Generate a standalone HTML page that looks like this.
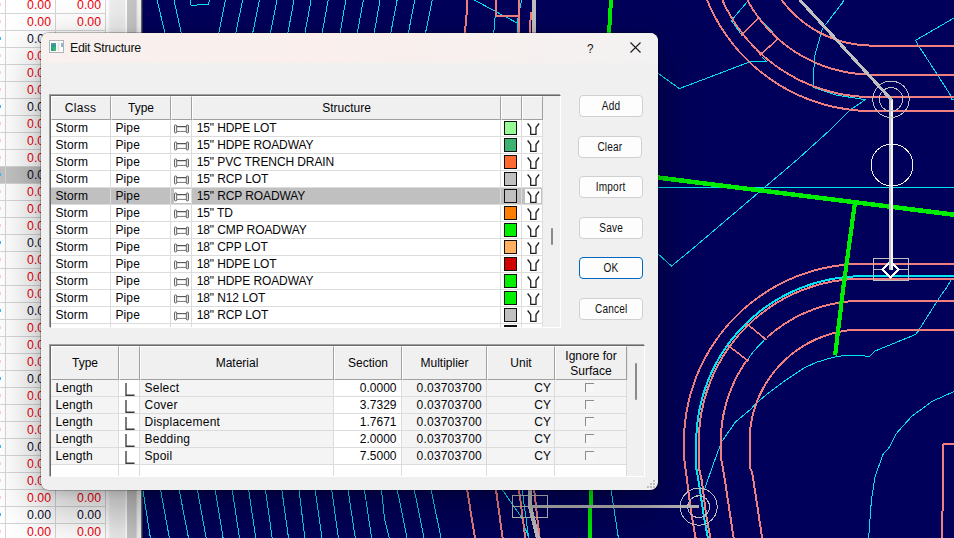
<!DOCTYPE html>
<html><head><meta charset="utf-8"><title>Edit Structure</title>
<style>
*{box-sizing:border-box;margin:0;padding:0}
html,body{width:954px;height:538px;overflow:hidden;background:#00005a}
body{position:relative;font-family:"Liberation Sans",Arial,sans-serif;font-size:12px;color:#050508}
.cad{position:absolute;left:0;top:0}
.sheet{position:absolute;left:0;top:0;width:143px;height:538px;overflow:hidden;
 background:linear-gradient(90deg,#fff 0,#fff 108px,#f6f6f6 109px,#eeeeee 110px,#eaeaea 118px,#ececec 125px,#fff 126px,#fff 127px,#c6c6c6 127px,#c3c3c3 136px,#e4e4e4 137px,#f0f0f0 138px,#f0f0f0 141px,#8a8a8a 141px,#3a3a50 142px,#16164a 143px)}
.sheet .r{position:absolute;left:0;width:106px;height:17px;border-bottom:1px solid #d6d6d6;color:#f0000c;line-height:16px;font-size:12.3px}
.sheet .r.b{color:#0c0c2a}
.sheet .r.sel{background:#c2c2c2}
.sheet .r i{position:absolute;left:0;top:6px;width:1px;height:3px;background:#ffc8f8}
.sheet .r.b i{background:#38b8ff}
.sheet .r span{position:absolute;top:0px;text-align:right;width:46px}
.sheet .c1{left:5px}
.sheet .c2{left:55px}
.sheet .v{position:absolute;top:0;width:1px;height:538px;background:#d6d6d6}
.dlg{position:absolute;left:41px;top:33px;width:617px;height:457px;background:#f0f0f0;border-radius:8px;overflow:hidden;
 box-shadow:0 0 0 1px rgba(0,0,0,.22)}
.shadow{position:absolute;left:41px;top:33px;width:617px;height:457px;border-radius:8px;box-shadow:0 18px 48px 4px rgba(0,0,0,.30),0 2px 10px rgba(0,0,0,.12)}
.tbar{position:absolute;left:0;top:0;width:100%;height:30px;background:linear-gradient(90deg,#f8f1ef 0,#faefec 45%,#f7f0ee 70%,#f3f2f2 100%)}
.ticon{position:absolute;left:8px;top:7px}
.ttl{position:absolute;left:29px;top:8px;font-size:12.4px;line-height:15px;color:#111;letter-spacing:-.3px}
.q{position:absolute;left:545.5px;top:7.5px;font-size:13px;line-height:15px;color:#111;transform:scaleX(.9);transform-origin:0 0}
.xb{position:absolute;left:588.5px;top:8.5px}
.hd{position:absolute;left:0;top:0;height:24px}
.hd span{position:absolute;top:0;height:24px;line-height:22px;text-align:center;background:#f0f0f0;border-right:1px solid #a0a0a0;border-bottom:1px solid #a0a0a0;border-left:1px solid #fff;border-top:1px solid #fff;box-shadow:1px 0 0 #e3e3e3}
.list1{position:absolute;left:9px;top:62px;width:511px;height:233px;background:#fff;border:1px solid #696969;border-right:1px solid #fff;border-bottom:1px solid #fff;box-shadow:-1px -1px 0 0 #a0a0a0;overflow:hidden}
.lr{position:absolute;left:0;width:492px;height:17px;border-bottom:1px solid #dcdcdc;line-height:16px}
.lr.sel{background:#c0c0c0}
.lr span{position:absolute;top:0;height:16px;white-space:nowrap;letter-spacing:-.1px}
.lr .a{left:4.5px;letter-spacing:.1px} .lr .b{left:64.5px;letter-spacing:.1px} .lr .ic{left:121px;width:20px} .lr .n{left:145.7px}
.lr .sw{left:451px;width:20px} .lr .fc{left:472px;width:20px}
.lr.sel .ic{background:#fff;left:123px;width:17px;top:1px;height:14px}
.lr.sel .ic .pi{left:.3px;top:3px}
.lr.sel .fc{background:#fff;left:474px;width:16px;top:1px;height:14px}
.lr.sel .fc .fu{left:1.5px;top:1.5px}
.pi{position:absolute;left:2.3px;top:4px}
.fu{position:absolute;left:3.5px;top:2.5px}
.sw b{position:absolute;left:2px;top:1px;width:13px;height:14px;border:1px solid #111}
.cv{position:absolute;top:24px;width:1px;height:210px;background:#dcdcdc}
.sbar{position:absolute;left:492px;top:0;width:18px;height:232px;background:#f0f0f0}
.sbar u{position:absolute;left:8px;width:2px;background:#8a8a8a;border-radius:1px}
.list2{position:absolute;left:9px;top:312px;width:595px;height:132px;background:#f0f0f0;border:1px solid #696969;border-right:1px solid #fff;border-bottom:1px solid #fff;box-shadow:-1px -1px 0 0 #a0a0a0;overflow:hidden}
.h2,.h2 span{height:34px}
.h2 span{line-height:32px}
.h2 span.two{line-height:15px;padding-top:2px}
.mr{position:absolute;left:0;width:576px;height:17px;line-height:16px}
.mr span{position:absolute;top:0;height:17px;border-right:1px solid #dcdcdc;border-bottom:1px solid #dcdcdc;white-space:nowrap;background:#f4f4f4}
.mr .t{left:0;width:68px;padding-left:4.5px;letter-spacing:.1px}
.mr .l{left:68px;width:21px;background:#fff}
.mr .m{left:89px;width:194px;padding-left:4.5px;letter-spacing:.25px}
.mr .s{left:283px;width:68px;background:#fff;text-align:right;padding-right:4.5px}
.mr .x{left:351px;width:85px;text-align:right;padding-right:4px;letter-spacing:.2px}
.mr .u{left:436px;width:68px;text-align:right;padding-right:3px}
.mr .k{left:504px;width:72px}
.mr.blank{height:12px} .mr.blank span{background:#fff;height:12px;border-bottom:0}
.li{position:absolute;left:6px;top:2.5px}
.k em{position:absolute;left:30px;top:3px;width:9px;height:9px;border-left:1px solid #8c8c8c;border-top:1px solid #8c8c8c;background:#f6f6f6}
.sbar2{position:absolute;left:577px;top:0;width:18px;height:132px;background:#f0f0f0}
.sbar2 u{position:absolute;left:7px;width:2px;background:#8a8a8a;border-radius:1px}
.btn{position:absolute;width:64px;height:22px;border:1px solid #d0d0d0;border-radius:4px;background:#fdfdfd;text-align:center;line-height:19px;font-size:12px;color:#111}
.btn.ok{border:1.5px solid #0067c0;line-height:19px}
.btn span{display:inline-block;position:relative;top:1px;transform:scaleX(.84);letter-spacing:.2px}
.grip{position:absolute;left:606px;top:447px}
</style></head>
<body>
<svg class="cad" width="954" height="538" viewBox="0 0 954 538" shape-rendering="crispEdges"><polyline points="157.1,0.0 165.2,34.0" fill="none" stroke="#00e4f0" stroke-width="1" />
<polyline points="174.0,0.0 181.5,34.0" fill="none" stroke="#00e4f0" stroke-width="1" />
<polyline points="190.3,0.0 190.3,4.5 191.6,5.3 197.4,5.0 198.4,4.0 208.4,4.0 209.7,0.0" fill="none" stroke="#00e4f0" stroke-width="1" />
<polyline points="225.5,0.0 223.0,12.0 218.7,34.0" fill="none" stroke="#00e4f0" stroke-width="1" />
<polyline points="242.6,0.0 235.6,34.0" fill="none" stroke="#00e4f0" stroke-width="1" />
<polyline points="259.5,0.0 252.5,34.0" fill="none" stroke="#00e4f0" stroke-width="1" />
<polyline points="277.1,0.0 270.3,34.0" fill="none" stroke="#00e4f0" stroke-width="1" />
<polyline points="294.0,0.0 287.7,34.0" fill="none" stroke="#00e4f0" stroke-width="1" />
<polyline points="311.1,0.0 304.8,34.0" fill="none" stroke="#00e4f0" stroke-width="1" />
<polyline points="328.2,0.0 321.9,34.0" fill="none" stroke="#00e4f0" stroke-width="1" />
<polyline points="345.8,0.0 340.0,34.0" fill="none" stroke="#00e4f0" stroke-width="1" />
<polyline points="363.4,0.0 357.1,34.0" fill="none" stroke="#00e4f0" stroke-width="1" />
<polyline points="380.0,0.0 374.0,34.0" fill="none" stroke="#00e4f0" stroke-width="1" />
<polyline points="397.1,0.0 390.6,34.0" fill="none" stroke="#00e4f0" stroke-width="1" />
<polyline points="414.7,0.0 408.2,34.0" fill="none" stroke="#00e4f0" stroke-width="1" />
<polyline points="432.3,0.0 425.3,34.0" fill="none" stroke="#00e4f0" stroke-width="1" />
<polyline points="474.3,0.0 517.1,23.0 517.1,34.0" fill="none" stroke="#00e4f0" stroke-width="1" />
<polyline points="495.2,16.0 493.7,34.0" fill="none" stroke="#00e4f0" stroke-width="1" />
<polyline points="521.6,0.0 517.1,23.0" fill="none" stroke="#00e4f0" stroke-width="1" />
<polyline points="142.7,489.0 150.4,538.0" fill="none" stroke="#00e4f0" stroke-width="1" />
<polyline points="160.4,489.0 169.4,538.0" fill="none" stroke="#00e4f0" stroke-width="1" />
<polyline points="179.0,489.0 188.5,538.0" fill="none" stroke="#00e4f0" stroke-width="1" />
<polyline points="197.2,489.0 206.2,538.0" fill="none" stroke="#00e4f0" stroke-width="1" />
<polyline points="215.0,489.0 223.1,538.0" fill="none" stroke="#00e4f0" stroke-width="1" />
<polyline points="232.1,489.0 239.5,538.0" fill="none" stroke="#00e4f0" stroke-width="1" />
<polyline points="248.5,489.0 255.8,538.0" fill="none" stroke="#00e4f0" stroke-width="1" />
<polyline points="265.3,489.0 272.2,538.0" fill="none" stroke="#00e4f0" stroke-width="1" />
<polyline points="281.7,489.0 288.5,538.0" fill="none" stroke="#00e4f0" stroke-width="1" />
<polyline points="298.9,489.0 304.9,538.0" fill="none" stroke="#00e4f0" stroke-width="1" />
<polyline points="315.0,489.0 322.0,538.0" fill="none" stroke="#00e4f0" stroke-width="1" />
<polyline points="331.6,489.0 338.4,538.0" fill="none" stroke="#00e4f0" stroke-width="1" />
<polyline points="347.9,489.0 355.3,538.0" fill="none" stroke="#00e4f0" stroke-width="1" />
<polyline points="364.3,489.0 371.6,538.0" fill="none" stroke="#00e4f0" stroke-width="1" />
<polyline points="381.4,489.0 384.7,520.0 389.3,538.0" fill="none" stroke="#00e4f0" stroke-width="1" />
<polyline points="397.1,489.0 407.0,538.0" fill="none" stroke="#00e4f0" stroke-width="1" />
<polyline points="414.1,489.0 424.0,538.0" fill="none" stroke="#00e4f0" stroke-width="1" />
<polyline points="431.0,489.0 441.0,538.0" fill="none" stroke="#00e4f0" stroke-width="1" />
<polyline points="501.8,489.0 521.1,516.7 528.7,538.0" fill="none" stroke="#00e4f0" stroke-width="1" />
<polyline points="522.0,489.0 528.7,538.0" fill="none" stroke="#00e4f0" stroke-width="1" />
<polyline points="610.9,489.0 618.4,538.0" fill="none" stroke="#00e4f0" stroke-width="1" />
<polyline points="747.0,2.0 731.4,20.5 740.6,33.5" fill="none" stroke="#00e4f0" stroke-width="1" />
<polyline points="759.0,17.6 778.3,38.5" fill="none" stroke="#00e4f0" stroke-width="1" />
<polyline points="761.6,56.5 766.6,61.4 750.2,61.7 679.4,88.6 657.0,72.5" fill="none" stroke="#00e4f0" stroke-width="1" />
<polyline points="843.5,0.0 842.7,2.5 822.5,28.5 819.2,40.0 815.0,55.0 813.8,70.0 813.3,87.5 836.0,95.0 865.3,99.7 849.4,110.5 830.0,130.0 796.8,160.0 691.1,250.0 671.5,266.0 657.0,253.0" fill="none" stroke="#00e4f0" stroke-width="1" />
<polyline points="954.0,18.0 915.6,40.3 918.2,45.0 951.7,97.0 951.7,99.5 954.0,99.5" fill="none" stroke="#00e4f0" stroke-width="1" />
<polyline points="657.0,187.4 954.0,187.4" fill="none" stroke="#00e4f0" stroke-width="1" />
<polyline points="954.0,276.3 862.0,276.3 857.7,276.4 853.3,276.5 849.0,276.8 844.7,277.2 840.4,277.7 836.1,278.3 831.8,279.1 827.5,279.9 823.3,280.9 819.1,281.9 814.9,283.1 810.8,284.4 806.7,285.8 802.6,287.3 798.6,288.9 794.6,290.6 790.7,292.4 786.8,294.4 782.9,296.4 779.1,298.5 775.4,300.7 771.8,303.0 768.1,305.4 764.6,307.9 761.1,310.5 757.7,313.2 754.4,316.0 751.1,318.9 747.9,321.8 744.8,324.8 741.8,327.9 738.9,331.1 736.0,334.4 733.2,337.7 730.5,341.1 727.9,344.6 725.4,348.1 723.0,351.8 720.7,355.4 718.5,359.1 716.4,362.9 714.4,366.8 712.4,370.7 710.6,374.6 708.9,378.6 707.3,382.6 705.8,386.7 704.4,390.8 703.1,394.9 701.9,399.1 700.9,403.3 699.9,407.5 699.1,411.8 698.3,416.1 697.7,420.4 697.2,424.7 696.8,429.0 696.5,433.3 696.4,437.7 696.3,442.0 696.1,467.1 698.7,481.6 703.7,515.1 707.9,538.0" fill="none" stroke="#00e4f0" stroke-width="2" />
<polyline points="766.6,340.1 765.7,338.7 763.9,340.4 762.2,342.2 760.4,343.9 758.7,345.7 757.1,347.5 755.4,349.4 753.8,351.2 752.3,353.1 750.7,355.1 749.2,357.0 748.2,361.1" fill="none" stroke="#00e4f0" stroke-width="1" />
<polyline points="950.9,280.5 945.0,290.0 940.0,296.7 918.2,331.1 915.6,334.5 874.5,351.2 869.5,356.6 865.3,356.6 864.5,355.4 844.3,355.4 832.6,357.4 815.8,362.5 804.0,368.0 784.2,381.2 767.4,393.8 757.4,402.2 749.8,410.0 735.6,421.8 722.1,441.1 717.1,453.7 704.5,489.1" fill="none" stroke="#00e4f0" stroke-width="1" />
<polyline points="954.0,391.6 931.6,401.6 911.4,416.7 896.3,433.5 888.8,448.0 883.3,453.7 875.1,476.4 871.4,500.1 868.7,538.0" fill="none" stroke="#00e4f0" stroke-width="1" />
<polyline points="466.3,0.0 466.3,12.0 464.3,34.0" fill="none" stroke="#f08080" stroke-width="1" /><polyline points="467.3,0.0 467.3,12.0 465.3,34.0" fill="none" stroke="#f08080" stroke-width="1" />
<polyline points="495.2,0.0 495.2,15.8" fill="none" stroke="#f08080" stroke-width="1" /><polyline points="496.2,0.0 496.2,15.8" fill="none" stroke="#f08080" stroke-width="1" /><polyline points="495.7,15.3 518.6,15.8" fill="none" stroke="#f08080" stroke-width="1" /><polyline points="495.7,16.3 518.6,16.8" fill="none" stroke="#f08080" stroke-width="1" /><polyline points="518.1,16.3 518.1,0.0" fill="none" stroke="#f08080" stroke-width="1" /><polyline points="519.1,16.3 519.1,0.0" fill="none" stroke="#f08080" stroke-width="1" />
<polyline points="518.6,16.0 518.6,34.0" fill="none" stroke="#f08080" stroke-width="1" /><polyline points="519.6,16.0 519.6,34.0" fill="none" stroke="#f08080" stroke-width="1" />
<polyline points="530.5,12.0 529.2,34.0" fill="none" stroke="#f08080" stroke-width="1" /><polyline points="531.5,12.0 530.2,34.0" fill="none" stroke="#f08080" stroke-width="1" />
<polyline points="466.5,489.0 474.5,538.0" fill="none" stroke="#f08080" stroke-width="1" /><polyline points="467.5,489.0 475.5,538.0" fill="none" stroke="#f08080" stroke-width="1" />
<polyline points="495.4,489.0 502.1,538.0" fill="none" stroke="#f08080" stroke-width="1" /><polyline points="496.4,489.0 503.1,538.0" fill="none" stroke="#f08080" stroke-width="1" />
<polyline points="518.4,489.0 524.8,538.0" fill="none" stroke="#f08080" stroke-width="1" /><polyline points="519.4,489.0 525.8,538.0" fill="none" stroke="#f08080" stroke-width="1" />
<polyline points="533.5,489.0 539.1,538.0" fill="none" stroke="#f08080" stroke-width="1" /><polyline points="534.5,489.0 540.1,538.0" fill="none" stroke="#f08080" stroke-width="1" />
<polyline points="703.7,-7.6 705.3,-3.2 707.0,1.1 708.9,5.4 710.8,9.6 712.9,13.8 715.1,17.9 717.3,22.0 719.7,26.0 722.2,29.9 724.8,33.8 727.5,37.6 730.3,41.4 733.2,45.0 736.1,48.6 739.2,52.1 742.4,55.5 745.6,58.9" fill="none" stroke="#f08080" stroke-width="1" /><polyline points="704.7,-7.6 706.3,-3.2 708.0,1.1 709.9,5.4 711.8,9.6 713.9,13.8 716.1,17.9 718.3,22.0 720.7,26.0 723.2,29.9 725.8,33.8 728.5,37.6 731.3,41.4 734.2,45.0 737.1,48.6 740.2,52.1 743.4,55.5 746.6,58.9" fill="none" stroke="#f08080" stroke-width="1" /><polyline points="746.1,58.4 749.5,61.6 752.9,64.8 756.4,67.9 760.0,70.8 763.6,73.7 767.4,76.5 771.2,79.2 775.1,81.8 779.0,84.3 783.0,86.7 787.1,88.9 791.2,91.1 795.4,93.2 799.6,95.1 803.9,97.0 808.2,98.7 812.6,100.3 817.0,101.8 821.4,103.2 825.9,104.4 830.4,105.6 835.0,106.6 839.6,107.5 844.2,108.3 848.8,109.0 853.4,109.5 858.0,110.0 862.7,110.3 867.3,110.4 872.0,110.5 954.0,110.5" fill="none" stroke="#f08080" stroke-width="1" /><polyline points="746.1,59.4 749.5,62.6 752.9,65.8 756.4,68.9 760.0,71.8 763.6,74.7 767.4,77.5 771.2,80.2 775.1,82.8 779.0,85.3 783.0,87.7 787.1,89.9 791.2,92.1 795.4,94.2 799.6,96.1 803.9,98.0 808.2,99.7 812.6,101.3 817.0,102.8 821.4,104.2 825.9,105.4 830.4,106.6 835.0,107.6 839.6,108.5 844.2,109.3 848.8,110.0 853.4,110.5 858.0,111.0 862.7,111.3 867.3,111.4 872.0,111.5 954.0,111.5" fill="none" stroke="#f08080" stroke-width="1" />
<polyline points="718.4,-8.2 720.0,-4.2 721.7,-0.3 723.5,3.6 725.4,7.5 727.4,11.3 729.5,15.0 731.7,18.7 734.0,22.3 736.3,25.9 738.8,29.4 741.4,32.8 744.0,36.2 746.8,39.5 749.6,42.7 752.5,45.9 755.5,49.0" fill="none" stroke="#f08080" stroke-width="1" /><polyline points="719.4,-8.2 721.0,-4.2 722.7,-0.3 724.5,3.6 726.4,7.5 728.4,11.3 730.5,15.0 732.7,18.7 735.0,22.3 737.3,25.9 739.8,29.4 742.4,32.8 745.0,36.2 747.8,39.5 750.6,42.7 753.5,45.9 756.5,49.0" fill="none" stroke="#f08080" stroke-width="1" /><polyline points="756.0,48.5 759.1,51.5 762.3,54.4 765.5,57.2 768.8,60.0 772.2,62.6 775.6,65.2 779.1,67.7 782.7,70.0 786.3,72.3 790.0,74.5 793.7,76.6 797.5,78.6 801.4,80.5 805.3,82.3 809.2,84.0 813.2,85.6 817.3,87.1 821.3,88.5 825.4,89.7 829.6,90.9 833.7,92.0 837.9,92.9 842.1,93.8 846.3,94.5 850.6,95.1 854.9,95.6 859.1,96.0 863.4,96.3 867.7,96.4 872.0,96.5 954.0,96.5" fill="none" stroke="#f08080" stroke-width="1" /><polyline points="756.0,49.5 759.1,52.5 762.3,55.4 765.5,58.2 768.8,61.0 772.2,63.6 775.6,66.2 779.1,68.7 782.7,71.0 786.3,73.3 790.0,75.5 793.7,77.6 797.5,79.6 801.4,81.5 805.3,83.3 809.2,85.0 813.2,86.6 817.3,88.1 821.3,89.5 825.4,90.7 829.6,91.9 833.7,93.0 837.9,93.9 842.1,94.8 846.3,95.5 850.6,96.1 854.9,96.6 859.1,97.0 863.4,97.3 867.7,97.4 872.0,97.5 954.0,97.5" fill="none" stroke="#f08080" stroke-width="1" />
<polyline points="742.2,-9.4 743.8,-6.1 745.4,-2.8 747.1,0.5 749.0,3.7 750.9,6.9 752.8,10.1 754.9,13.1 757.0,16.2 759.2,19.1 761.5,22.0 763.9,24.9 766.3,27.7 768.9,30.4 771.4,33.1" fill="none" stroke="#f08080" stroke-width="1" /><polyline points="743.2,-9.4 744.8,-6.1 746.4,-2.8 748.1,0.5 750.0,3.7 751.9,6.9 753.8,10.1 755.9,13.1 758.0,16.2 760.2,19.1 762.5,22.0 764.9,24.9 767.3,27.7 769.9,30.4 772.4,33.1" fill="none" stroke="#f08080" stroke-width="1" /><polyline points="771.9,32.6 774.6,35.1 777.3,37.7 780.1,40.1 783.0,42.5 785.9,44.8 788.8,47.0 791.9,49.1 794.9,51.2 798.1,53.1 801.2,55.0 804.5,56.9 807.8,58.6 811.1,60.2 814.4,61.8 817.9,63.2 821.3,64.6 824.8,65.9 828.3,67.1 831.8,68.2 835.4,69.2 839.0,70.1 842.6,70.9 846.2,71.6 849.9,72.3 853.5,72.8 857.2,73.2 860.9,73.6 864.6,73.8 868.3,74.0 872.0,74.0 954.0,74.0" fill="none" stroke="#f08080" stroke-width="1" /><polyline points="771.9,33.6 774.6,36.1 777.3,38.7 780.1,41.1 783.0,43.5 785.9,45.8 788.8,48.0 791.9,50.1 794.9,52.2 798.1,54.1 801.2,56.0 804.5,57.9 807.8,59.6 811.1,61.2 814.4,62.8 817.9,64.2 821.3,65.6 824.8,66.9 828.3,68.1 831.8,69.2 835.4,70.2 839.0,71.1 842.6,71.9 846.2,72.6 849.9,73.3 853.5,73.8 857.2,74.2 860.9,74.6 864.6,74.8 868.3,75.0 872.0,75.0 954.0,75.0" fill="none" stroke="#f08080" stroke-width="1" />
<polyline points="775.6,-8.2 777.1,-5.7 778.8,-3.3 780.5,-0.9 782.2,1.5 784.1,3.8 786.0,6.1 787.9,8.3 789.9,10.4 792.0,12.5" fill="none" stroke="#f08080" stroke-width="1" /><polyline points="776.6,-8.2 778.1,-5.7 779.8,-3.3 781.5,-0.9 783.2,1.5 785.1,3.8 787.0,6.1 788.9,8.3 790.9,10.4 793.0,12.5" fill="none" stroke="#f08080" stroke-width="1" /><polyline points="792.5,12.0 794.6,14.1 796.7,16.1 798.9,18.0 801.2,19.9 803.5,21.8 805.9,23.5 808.3,25.2 810.7,26.9 813.2,28.4 815.8,29.9 818.3,31.4 820.9,32.7 823.6,34.0 826.2,35.3 828.9,36.4 831.7,37.5 834.4,38.5 837.2,39.5 840.0,40.4 842.9,41.2 845.7,41.9 848.6,42.5 851.5,43.1 854.4,43.6 857.3,44.0 860.2,44.4 863.2,44.7 866.1,44.8 869.1,45.0 872.0,45.0 954.0,45.0" fill="none" stroke="#f08080" stroke-width="1" /><polyline points="792.5,13.0 794.6,15.1 796.7,17.1 798.9,19.0 801.2,20.9 803.5,22.8 805.9,24.5 808.3,26.2 810.7,27.9 813.2,29.4 815.8,30.9 818.3,32.4 820.9,33.7 823.6,35.0 826.2,36.3 828.9,37.4 831.7,38.5 834.4,39.5 837.2,40.5 840.0,41.4 842.9,42.2 845.7,42.9 848.6,43.5 851.5,44.1 854.4,44.6 857.3,45.0 860.2,45.4 863.2,45.7 866.1,45.8 869.1,46.0 872.0,46.0 954.0,46.0" fill="none" stroke="#f08080" stroke-width="1" />
<polyline points="759.0,17.6 741.4,35.5" fill="none" stroke="#f08080" stroke-width="1.6" />
<polyline points="778.3,38.7 759.9,55.0" fill="none" stroke="#f08080" stroke-width="1.6" />
<polyline points="954.0,263.5 862.0,263.5 857.3,263.6 852.7,263.7 848.0,264.0 843.4,264.5 838.8,265.0 834.2,265.7 829.6,266.5 825.0,267.4 820.4,268.4 815.9,269.6 811.4,270.8 807.0,272.2 802.6,273.7 798.2,275.3 793.9,277.0 789.6,278.9 785.4,280.8 781.2,282.9 777.1,285.1 773.0,287.3 769.0,289.7 765.1,292.2 761.2,294.8 757.4,297.5 753.6,300.3 750.0,303.2 746.4,306.1 742.9,309.2 739.5,312.4 736.1,315.6" fill="none" stroke="#f08080" stroke-width="1" /><polyline points="954.0,264.5 862.0,264.5 857.3,264.6 852.7,264.7 848.0,265.0 843.4,265.5 838.8,266.0 834.2,266.7 829.6,267.5 825.0,268.4 820.4,269.4 815.9,270.6 811.4,271.8 807.0,273.2 802.6,274.7 798.2,276.3 793.9,278.0 789.6,279.9 785.4,281.8 781.2,283.9 777.1,286.1 773.0,288.3 769.0,290.7 765.1,293.2 761.2,295.8 757.4,298.5 753.6,301.3 750.0,304.2 746.4,307.1 742.9,310.2 739.5,313.4 736.1,316.6" fill="none" stroke="#f08080" stroke-width="1" /><polyline points="735.6,316.1 732.4,319.5 729.2,322.9 726.1,326.4 723.2,330.0 720.3,333.6 717.5,337.4 714.8,341.2 712.2,345.1 709.7,349.0 707.3,353.0 705.1,357.1 702.9,361.2 700.8,365.4 698.9,369.6 697.0,373.9 695.3,378.2 693.7,382.6 692.2,387.0 690.8,391.4 689.6,395.9 688.4,400.4 687.4,405.0 686.5,409.6 685.7,414.2 685.0,418.8 684.5,423.4 684.0,428.0 683.7,432.7 683.6,437.3 683.5,442.0 683.9,460.0 685.6,473.2 689.8,506.7 695.1,538.0" fill="none" stroke="#f08080" stroke-width="1" /><polyline points="736.6,316.1 733.4,319.5 730.2,322.9 727.1,326.4 724.2,330.0 721.3,333.6 718.5,337.4 715.8,341.2 713.2,345.1 710.7,349.0 708.3,353.0 706.1,357.1 703.9,361.2 701.8,365.4 699.9,369.6 698.0,373.9 696.3,378.2 694.7,382.6 693.2,387.0 691.8,391.4 690.6,395.9 689.4,400.4 688.4,405.0 687.5,409.6 686.7,414.2 686.0,418.8 685.5,423.4 685.0,428.0 684.7,432.7 684.6,437.3 684.5,442.0 684.9,460.0 686.6,473.2 690.8,506.7 696.1,538.0" fill="none" stroke="#f08080" stroke-width="1" />
<polyline points="954.0,278.3 862.0,278.3 857.7,278.4 853.5,278.5 849.2,278.8 844.9,279.2 840.7,279.7 836.5,280.3 832.3,281.0 828.1,281.9 823.9,282.8 819.8,283.9 815.6,285.0 811.6,286.3 807.5,287.7 803.5,289.1 799.5,290.7 795.6,292.4 791.7,294.2 787.9,296.1 784.1,298.1 780.4,300.2 776.7,302.3 773.1,304.6 769.6,307.0 766.1,309.5 762.7,312.0 759.3,314.7 756.0,317.4 752.8,320.2 749.7,323.1 746.6,326.1" fill="none" stroke="#f08080" stroke-width="1" /><polyline points="954.0,279.3 862.0,279.3 857.7,279.4 853.5,279.5 849.2,279.8 844.9,280.2 840.7,280.7 836.5,281.3 832.3,282.0 828.1,282.9 823.9,283.8 819.8,284.9 815.6,286.0 811.6,287.3 807.5,288.7 803.5,290.1 799.5,291.7 795.6,293.4 791.7,295.2 787.9,297.1 784.1,299.1 780.4,301.2 776.7,303.3 773.1,305.6 769.6,308.0 766.1,310.5 762.7,313.0 759.3,315.7 756.0,318.4 752.8,321.2 749.7,324.1 746.6,327.1" fill="none" stroke="#f08080" stroke-width="1" /><polyline points="746.1,326.6 743.1,329.7 740.2,332.8 737.4,336.0 734.7,339.3 732.0,342.7 729.5,346.1 727.0,349.6 724.6,353.1 722.3,356.7 720.2,360.4 718.1,364.1 716.1,367.9 714.2,371.7 712.4,375.6 710.7,379.5 709.1,383.5 707.7,387.5 706.3,391.6 705.0,395.6 703.9,399.8 702.8,403.9 701.9,408.1 701.0,412.3 700.3,416.5 699.7,420.7 699.2,424.9 698.8,429.2 698.5,433.5 698.4,437.7 698.3,442.0 698.2,467.0 701.5,481.6 705.7,515.1 709.9,538.0" fill="none" stroke="#f08080" stroke-width="1" /><polyline points="747.1,326.6 744.1,329.7 741.2,332.8 738.4,336.0 735.7,339.3 733.0,342.7 730.5,346.1 728.0,349.6 725.6,353.1 723.3,356.7 721.2,360.4 719.1,364.1 717.1,367.9 715.2,371.7 713.4,375.6 711.7,379.5 710.1,383.5 708.7,387.5 707.3,391.6 706.0,395.6 704.9,399.8 703.8,403.9 702.9,408.1 702.0,412.3 701.3,416.5 700.7,420.7 700.2,424.9 699.8,429.2 699.5,433.5 699.4,437.7 699.3,442.0 699.2,467.0 702.5,481.6 706.7,515.1 710.9,538.0" fill="none" stroke="#f08080" stroke-width="1" />
<polyline points="954.0,300.3 862.0,300.3 859.5,300.3 857.1,300.4 854.6,300.5 852.2,300.6 849.7,300.8 847.2,301.1 844.8,301.4 842.3,301.7 839.9,302.0 837.5,302.4 835.1,302.9 832.6,303.4 830.2,303.9 827.8,304.5 825.5,305.1 823.1,305.8 820.7,306.5 818.4,307.2 816.0,308.0 813.7,308.8 811.4,309.7 809.1,310.6 806.8,311.5 804.6,312.5 802.3,313.5 800.1,314.6 797.9,315.7 795.7,316.8 793.5,318.0 791.4,319.2 789.3,320.5 787.2,321.8 785.1,323.1 783.0,324.4 781.0,325.8 779.0,327.3 777.0,328.7 775.1,330.2 773.1,331.8 771.2,333.3 769.4,334.9 767.5,336.6" fill="none" stroke="#f08080" stroke-width="1" /><polyline points="954.0,301.3 862.0,301.3 859.5,301.3 857.1,301.4 854.6,301.5 852.2,301.6 849.7,301.8 847.2,302.1 844.8,302.4 842.3,302.7 839.9,303.0 837.5,303.4 835.1,303.9 832.6,304.4 830.2,304.9 827.8,305.5 825.5,306.1 823.1,306.8 820.7,307.5 818.4,308.2 816.0,309.0 813.7,309.8 811.4,310.7 809.1,311.6 806.8,312.5 804.6,313.5 802.3,314.5 800.1,315.6 797.9,316.7 795.7,317.8 793.5,319.0 791.4,320.2 789.3,321.5 787.2,322.8 785.1,324.1 783.0,325.4 781.0,326.8 779.0,328.3 777.0,329.7 775.1,331.2 773.1,332.8 771.2,334.3 769.4,335.9 767.5,337.6" fill="none" stroke="#f08080" stroke-width="1" />
<polyline points="747.3,359.0 745.8,361.0 744.4,363.0 743.1,365.1 741.8,367.2 740.5,369.3 739.2,371.4 738.0,373.5 736.8,375.7 735.7,377.9 734.6,380.1 733.5,382.3 732.5,384.6 731.5,386.8 730.6,389.1 729.7,391.4 728.8,393.7 728.0,396.0 727.2,398.4 726.5,400.7 725.8,403.1 725.1,405.5 724.5,407.8 723.9,410.2 723.4,412.6 722.9,415.1 722.4,417.5 722.0,419.9 721.7,422.3 721.4,424.8 721.1,427.2 720.8,429.7 720.6,432.2 720.5,434.6 720.4,437.1 720.3,439.5 720.3,442.0 720.8,460.0 723.3,473.2 728.4,506.7 733.1,538.0" fill="none" stroke="#f08080" stroke-width="1" /><polyline points="748.3,359.0 746.8,361.0 745.4,363.0 744.1,365.1 742.8,367.2 741.5,369.3 740.2,371.4 739.0,373.5 737.8,375.7 736.7,377.9 735.6,380.1 734.5,382.3 733.5,384.6 732.5,386.8 731.6,389.1 730.7,391.4 729.8,393.7 729.0,396.0 728.2,398.4 727.5,400.7 726.8,403.1 726.1,405.5 725.5,407.8 724.9,410.2 724.4,412.6 723.9,415.1 723.4,417.5 723.0,419.9 722.7,422.3 722.4,424.8 722.1,427.2 721.8,429.7 721.6,432.2 721.5,434.6 721.4,437.1 721.3,439.5 721.3,442.0 721.8,460.0 724.3,473.2 729.4,506.7 734.1,538.0" fill="none" stroke="#f08080" stroke-width="1" />
<polyline points="746.5,323.4 766.6,340.1" fill="none" stroke="#f08080" stroke-width="1.6" />
<polyline points="727.5,344.8 748.2,361.1" fill="none" stroke="#f08080" stroke-width="1.6" />
<polyline points="954.0,329.0 862.0,329.0 859.1,329.0 856.1,329.2 853.2,329.3 850.2,329.6 847.3,330.0 844.4,330.4 841.5,330.9 838.6,331.5 835.7,332.1 832.9,332.8 830.0,333.6 827.2,334.5 824.4,335.5 821.7,336.5 818.9,337.6 816.2,338.7 813.6,340.0 810.9,341.3 808.3,342.6 805.8,344.1 803.2,345.6 800.7,347.1 798.3,348.8 795.9,350.5 793.5,352.2 791.2,354.1 788.9,356.0 786.7,357.9 784.6,359.9 782.5,362.0" fill="none" stroke="#f08080" stroke-width="1" /><polyline points="954.0,330.0 862.0,330.0 859.1,330.0 856.1,330.2 853.2,330.3 850.2,330.6 847.3,331.0 844.4,331.4 841.5,331.9 838.6,332.5 835.7,333.1 832.9,333.8 830.0,334.6 827.2,335.5 824.4,336.5 821.7,337.5 818.9,338.6 816.2,339.7 813.6,341.0 810.9,342.3 808.3,343.6 805.8,345.1 803.2,346.6 800.7,348.1 798.3,349.8 795.9,351.5 793.5,353.2 791.2,355.1 788.9,357.0 786.7,358.9 784.6,360.9 782.5,363.0" fill="none" stroke="#f08080" stroke-width="1" /><polyline points="782.0,362.5 779.9,364.6 777.9,366.7 776.0,368.9 774.1,371.2 772.2,373.5 770.5,375.9 768.8,378.3 767.1,380.7 765.6,383.2 764.1,385.8 762.6,388.3 761.3,390.9 760.0,393.6 758.7,396.2 757.6,398.9 756.5,401.7 755.5,404.4 754.5,407.2 753.6,410.0 752.8,412.9 752.1,415.7 751.5,418.6 750.9,421.5 750.4,424.4 750.0,427.3 749.6,430.2 749.3,433.2 749.2,436.1 749.0,439.1 749.0,442.0 749.3,467.0 751.8,473.2 756.9,506.7 761.6,538.0" fill="none" stroke="#f08080" stroke-width="1" /><polyline points="783.0,362.5 780.9,364.6 778.9,366.7 777.0,368.9 775.1,371.2 773.2,373.5 771.5,375.9 769.8,378.3 768.1,380.7 766.6,383.2 765.1,385.8 763.6,388.3 762.3,390.9 761.0,393.6 759.7,396.2 758.6,398.9 757.5,401.7 756.5,404.4 755.5,407.2 754.6,410.0 753.8,412.9 753.1,415.7 752.5,418.6 751.9,421.5 751.4,424.4 751.0,427.3 750.6,430.2 750.3,433.2 750.2,436.1 750.0,439.1 750.0,442.0 750.3,467.0 752.8,473.2 757.9,506.7 762.6,538.0" fill="none" stroke="#f08080" stroke-width="1" />
<polyline points="954.0,443.3 943.1,443.3" fill="none" stroke="#f08080" stroke-width="1" /><polyline points="954.0,444.3 943.1,444.3" fill="none" stroke="#f08080" stroke-width="1" /><polyline points="942.6,443.8 942.6,510.7" fill="none" stroke="#f08080" stroke-width="1" /><polyline points="943.6,443.8 943.6,510.7" fill="none" stroke="#f08080" stroke-width="1" /><polyline points="943.1,510.2 942.0,510.2" fill="none" stroke="#f08080" stroke-width="1" /><polyline points="943.1,511.2 942.0,511.2" fill="none" stroke="#f08080" stroke-width="1" /><polyline points="941.5,510.7 941.5,538.0" fill="none" stroke="#f08080" stroke-width="1" /><polyline points="942.5,510.7 942.5,538.0" fill="none" stroke="#f08080" stroke-width="1" />
<polyline points="611.0,0.0 609.0,34.0" fill="none" stroke="#00ee00" stroke-width="4" />
<polyline points="590.9,489.0 589.9,538.0" fill="none" stroke="#00ee00" stroke-width="4" />
<polyline points="655.0,177.2 954.0,214.7" fill="none" stroke="#00ee00" stroke-width="4.5" />
<polyline points="855.0,202.0 843.0,290.0 835.1,355.4" fill="none" stroke="#00ee00" stroke-width="4.2" />
<polyline points="534.0,0.0 534.0,34.0" fill="none" stroke="#c0c0c0" stroke-width="3.5" />
<polyline points="530.0,489.0 530.0,506.6 537.9,538.0" fill="none" stroke="#c0c0c0" stroke-width="4" stroke-linejoin="round"/>
<polyline points="530.0,506.6 698.7,506.6" fill="none" stroke="#b4b4b4" stroke-width="3.5" />
<rect x="512.5" y="495.5" width="34.5" height="22" fill="none" stroke="#c0c0c0" stroke-width="1"/>
<polyline points="512.5,506.6 530.0,506.6" fill="none" stroke="#c0c0c0" stroke-width="1" />
<circle cx="698.7" cy="506.7" r="18.5" fill="none" stroke="#c0c0c0" stroke-width="1"/>
<circle cx="698.7" cy="506.7" r="10.9" fill="none" stroke="#c0c0c0" stroke-width="1"/>
<polyline points="799.9,0.0 891.0,99.3" fill="none" stroke="#c0c0c0" stroke-width="3.1" />
<polyline points="891.0,99.3 891.0,269.6" fill="none" stroke="#c4c4c4" stroke-width="4" />
<polyline points="891.5,100.0 891.5,269.6" fill="none" stroke="#f4f4f4" stroke-width="2" />
<circle cx="891" cy="99.3" r="18.2" fill="none" stroke="#c0c0c0" stroke-width="1"/>
<circle cx="891" cy="99.3" r="11.7" fill="none" stroke="#c0c0c0" stroke-width="1"/>
<circle cx="892" cy="165" r="21" fill="none" stroke="#f0f0f0" stroke-width="1"/>
<rect x="873.5" y="258.5" width="34.5" height="22" fill="none" stroke="#c0c0c0" stroke-width="1"/>
<polyline points="873.5,269.6 908.0,269.6" fill="none" stroke="#c0c0c0" stroke-width="1" />
<polygon points="890.6,261.4 898.8,269.6 890.6,277.8 882.4,269.6" fill="#00005a" stroke="#ffffff" stroke-width="2"/>
<polyline points="891.0,255.0 891.0,270.0" fill="none" stroke="#c4c4c4" stroke-width="4" />
<polyline points="891.5,255.0 891.5,270.0" fill="none" stroke="#f4f4f4" stroke-width="2" /></svg>
<div class="sheet"><div class="r" style="top:-3px"><i></i><span class="c1">0.00</span><span class="c2">0.00</span></div><div class="r" style="top:14px"><i></i><span class="c1">0.00</span><span class="c2">0.00</span></div><div class="r b" style="top:31px"><i></i><span class="c1">0.00</span><span class="c2">0.00</span></div><div class="r" style="top:48px"><i></i><span class="c1">0.00</span><span class="c2">0.00</span></div><div class="r" style="top:65px"><i></i><span class="c1">0.00</span><span class="c2">0.00</span></div><div class="r" style="top:82px"><i></i><span class="c1">0.00</span><span class="c2">0.00</span></div><div class="r b" style="top:99px"><i></i><span class="c1">0.00</span><span class="c2">0.00</span></div><div class="r" style="top:116px"><i></i><span class="c1">0.00</span><span class="c2">0.00</span></div><div class="r" style="top:133px"><i></i><span class="c1">0.00</span><span class="c2">0.00</span></div><div class="r" style="top:150px"><i></i><span class="c1">0.00</span><span class="c2">0.00</span></div><div class="r b sel" style="top:167px"><i></i><span class="c1">0.00</span><span class="c2">0.00</span></div><div class="r" style="top:184px"><i></i><span class="c1">0.00</span><span class="c2">0.00</span></div><div class="r" style="top:201px"><i></i><span class="c1">0.00</span><span class="c2">0.00</span></div><div class="r" style="top:218px"><i></i><span class="c1">0.00</span><span class="c2">0.00</span></div><div class="r b" style="top:235px"><i></i><span class="c1">0.00</span><span class="c2">0.00</span></div><div class="r" style="top:252px"><i></i><span class="c1">0.00</span><span class="c2">0.00</span></div><div class="r" style="top:269px"><i></i><span class="c1">0.00</span><span class="c2">0.00</span></div><div class="r" style="top:286px"><i></i><span class="c1">0.00</span><span class="c2">0.00</span></div><div class="r b" style="top:303px"><i></i><span class="c1">0.00</span><span class="c2">0.00</span></div><div class="r" style="top:320px"><i></i><span class="c1">0.00</span><span class="c2">0.00</span></div><div class="r" style="top:337px"><i></i><span class="c1">0.00</span><span class="c2">0.00</span></div><div class="r" style="top:354px"><i></i><span class="c1">0.00</span><span class="c2">0.00</span></div><div class="r b" style="top:371px"><i></i><span class="c1">0.00</span><span class="c2">0.00</span></div><div class="r" style="top:388px"><i></i><span class="c1">0.00</span><span class="c2">0.00</span></div><div class="r" style="top:405px"><i></i><span class="c1">0.00</span><span class="c2">0.00</span></div><div class="r" style="top:422px"><i></i><span class="c1">0.00</span><span class="c2">0.00</span></div><div class="r b" style="top:439px"><i></i><span class="c1">0.00</span><span class="c2">0.00</span></div><div class="r" style="top:456px"><i></i><span class="c1">0.00</span><span class="c2">0.00</span></div><div class="r" style="top:473px"><i></i><span class="c1">0.00</span><span class="c2">0.00</span></div><div class="r" style="top:490px"><i></i><span class="c1">0.00</span><span class="c2">0.00</span></div><div class="r b" style="top:507px"><i></i><span class="c1">0.00</span><span class="c2">0.00</span></div><div class="r" style="top:524px"><i></i><span class="c1">0.00</span><span class="c2">0.00</span></div><div class="r" style="top:541px"><i></i><span class="c1">0.00</span><span class="c2">0.00</span></div><div class="v" style="left:5px"></div><div class="v" style="left:55px"></div><div class="v" style="left:105px"></div></div>
<div class="shadow"></div>
<div class="dlg">
<div class="tbar"><svg class="ticon" width="15" height="13" viewBox="0 0 15 13"><rect x=".5" y=".5" width="14" height="12" fill="#fdfdfd" stroke="#b2b2b2"/><rect x="2" y="3" width="5" height="8" fill="#2f9a92"/><rect x="4" y="7" width="3" height="4" fill="#35b86a"/><rect x="2" y="3" width="5" height="2" fill="#4a9aa0"/><rect x="8.500" y="2" width="2" height="9" fill="#e4e4e4"/><rect x="12" y="3" width="2" height="4" fill="#8fb4cf"/></svg><div class="ttl">Edit Structure</div><div class="q">?</div>
<svg class="xb" width="11" height="11" viewBox="0 0 11 11"><path d="M.5 .5l10 10M10.500 .5l-10 10" stroke="#1a1a1a" stroke-width="1.1" fill="none"/></svg></div>
<div class="list1"><div class="hd"><span style="left:0;width:60px;letter-spacing:.3px;text-indent:-1px">Class</span><span style="left:60px;width:60px">Type</span><span style="left:120px;width:21px"></span><span style="left:141px;width:309px">Structure</span><span style="left:450px;width:21px"></span><span style="left:471px;width:21px"></span></div><div class="lr" style="top:24px"><span class="a">Storm</span><span class="b">Pipe</span><span class="ic"><svg class="pi" width="15" height="10" viewBox="0 0 15 10"><path d="M3 2.6h9" stroke="#555" stroke-width="1.1" fill="none"/><path d="M3 7.4h9" stroke="#777" stroke-width="1" fill="none"/><rect x=".5" y=".9" width="2.2" height="8.1" rx="1.1" fill="#f2f2f2" stroke="#555" stroke-width=".9"/><rect x="12.3" y=".9" width="2.2" height="8.1" rx="1.1" fill="#ddd" stroke="#555" stroke-width=".9"/></svg></span><span class="n">15" HDPE LOT</span><span class="sw"><b style="background:#98fb98"></b></span><span class="fc"><svg class="fu" width="13" height="12" viewBox="0 0 13 12"><path d="M.6 .5L3.7 4.5V11.3H9V4.5L12.1 .5" fill="none" stroke="#222" stroke-width="1.3"/></svg></span></div><div class="lr" style="top:41px"><span class="a">Storm</span><span class="b">Pipe</span><span class="ic"><svg class="pi" width="15" height="10" viewBox="0 0 15 10"><path d="M3 2.6h9" stroke="#555" stroke-width="1.1" fill="none"/><path d="M3 7.4h9" stroke="#777" stroke-width="1" fill="none"/><rect x=".5" y=".9" width="2.2" height="8.1" rx="1.1" fill="#f2f2f2" stroke="#555" stroke-width=".9"/><rect x="12.3" y=".9" width="2.2" height="8.1" rx="1.1" fill="#ddd" stroke="#555" stroke-width=".9"/></svg></span><span class="n">15" HDPE ROADWAY</span><span class="sw"><b style="background:#3cb371"></b></span><span class="fc"><svg class="fu" width="13" height="12" viewBox="0 0 13 12"><path d="M.6 .5L3.7 4.5V11.3H9V4.5L12.1 .5" fill="none" stroke="#222" stroke-width="1.3"/></svg></span></div><div class="lr" style="top:58px"><span class="a">Storm</span><span class="b">Pipe</span><span class="ic"><svg class="pi" width="15" height="10" viewBox="0 0 15 10"><path d="M3 2.6h9" stroke="#555" stroke-width="1.1" fill="none"/><path d="M3 7.4h9" stroke="#777" stroke-width="1" fill="none"/><rect x=".5" y=".9" width="2.2" height="8.1" rx="1.1" fill="#f2f2f2" stroke="#555" stroke-width=".9"/><rect x="12.3" y=".9" width="2.2" height="8.1" rx="1.1" fill="#ddd" stroke="#555" stroke-width=".9"/></svg></span><span class="n">15" PVC TRENCH DRAIN</span><span class="sw"><b style="background:#ff6a30"></b></span><span class="fc"><svg class="fu" width="13" height="12" viewBox="0 0 13 12"><path d="M.6 .5L3.7 4.5V11.3H9V4.5L12.1 .5" fill="none" stroke="#222" stroke-width="1.3"/></svg></span></div><div class="lr" style="top:75px"><span class="a">Storm</span><span class="b">Pipe</span><span class="ic"><svg class="pi" width="15" height="10" viewBox="0 0 15 10"><path d="M3 2.6h9" stroke="#555" stroke-width="1.1" fill="none"/><path d="M3 7.4h9" stroke="#777" stroke-width="1" fill="none"/><rect x=".5" y=".9" width="2.2" height="8.1" rx="1.1" fill="#f2f2f2" stroke="#555" stroke-width=".9"/><rect x="12.3" y=".9" width="2.2" height="8.1" rx="1.1" fill="#ddd" stroke="#555" stroke-width=".9"/></svg></span><span class="n">15" RCP LOT</span><span class="sw"><b style="background:#c0c0c0"></b></span><span class="fc"><svg class="fu" width="13" height="12" viewBox="0 0 13 12"><path d="M.6 .5L3.7 4.5V11.3H9V4.5L12.1 .5" fill="none" stroke="#222" stroke-width="1.3"/></svg></span></div><div class="lr sel" style="top:92px"><span class="a">Storm</span><span class="b">Pipe</span><span class="ic"><svg class="pi" width="15" height="10" viewBox="0 0 15 10"><path d="M3 2.6h9" stroke="#555" stroke-width="1.1" fill="none"/><path d="M3 7.4h9" stroke="#777" stroke-width="1" fill="none"/><rect x=".5" y=".9" width="2.2" height="8.1" rx="1.1" fill="#f2f2f2" stroke="#555" stroke-width=".9"/><rect x="12.3" y=".9" width="2.2" height="8.1" rx="1.1" fill="#ddd" stroke="#555" stroke-width=".9"/></svg></span><span class="n">15" RCP ROADWAY</span><span class="sw"><b style="background:#c0c0c0"></b></span><span class="fc"><svg class="fu" width="13" height="12" viewBox="0 0 13 12"><path d="M.6 .5L3.7 4.5V11.3H9V4.5L12.1 .5" fill="none" stroke="#222" stroke-width="1.3"/></svg></span></div><div class="lr" style="top:109px"><span class="a">Storm</span><span class="b">Pipe</span><span class="ic"><svg class="pi" width="15" height="10" viewBox="0 0 15 10"><path d="M3 2.6h9" stroke="#555" stroke-width="1.1" fill="none"/><path d="M3 7.4h9" stroke="#777" stroke-width="1" fill="none"/><rect x=".5" y=".9" width="2.2" height="8.1" rx="1.1" fill="#f2f2f2" stroke="#555" stroke-width=".9"/><rect x="12.3" y=".9" width="2.2" height="8.1" rx="1.1" fill="#ddd" stroke="#555" stroke-width=".9"/></svg></span><span class="n">15" TD</span><span class="sw"><b style="background:#ff8000"></b></span><span class="fc"><svg class="fu" width="13" height="12" viewBox="0 0 13 12"><path d="M.6 .5L3.7 4.5V11.3H9V4.5L12.1 .5" fill="none" stroke="#222" stroke-width="1.3"/></svg></span></div><div class="lr" style="top:126px"><span class="a">Storm</span><span class="b">Pipe</span><span class="ic"><svg class="pi" width="15" height="10" viewBox="0 0 15 10"><path d="M3 2.6h9" stroke="#555" stroke-width="1.1" fill="none"/><path d="M3 7.4h9" stroke="#777" stroke-width="1" fill="none"/><rect x=".5" y=".9" width="2.2" height="8.1" rx="1.1" fill="#f2f2f2" stroke="#555" stroke-width=".9"/><rect x="12.3" y=".9" width="2.2" height="8.1" rx="1.1" fill="#ddd" stroke="#555" stroke-width=".9"/></svg></span><span class="n">18" CMP ROADWAY</span><span class="sw"><b style="background:#00f000"></b></span><span class="fc"><svg class="fu" width="13" height="12" viewBox="0 0 13 12"><path d="M.6 .5L3.7 4.5V11.3H9V4.5L12.1 .5" fill="none" stroke="#222" stroke-width="1.3"/></svg></span></div><div class="lr" style="top:143px"><span class="a">Storm</span><span class="b">Pipe</span><span class="ic"><svg class="pi" width="15" height="10" viewBox="0 0 15 10"><path d="M3 2.6h9" stroke="#555" stroke-width="1.1" fill="none"/><path d="M3 7.4h9" stroke="#777" stroke-width="1" fill="none"/><rect x=".5" y=".9" width="2.2" height="8.1" rx="1.1" fill="#f2f2f2" stroke="#555" stroke-width=".9"/><rect x="12.3" y=".9" width="2.2" height="8.1" rx="1.1" fill="#ddd" stroke="#555" stroke-width=".9"/></svg></span><span class="n">18" CPP LOT</span><span class="sw"><b style="background:#ffb060"></b></span><span class="fc"><svg class="fu" width="13" height="12" viewBox="0 0 13 12"><path d="M.6 .5L3.7 4.5V11.3H9V4.5L12.1 .5" fill="none" stroke="#222" stroke-width="1.3"/></svg></span></div><div class="lr" style="top:160px"><span class="a">Storm</span><span class="b">Pipe</span><span class="ic"><svg class="pi" width="15" height="10" viewBox="0 0 15 10"><path d="M3 2.6h9" stroke="#555" stroke-width="1.1" fill="none"/><path d="M3 7.4h9" stroke="#777" stroke-width="1" fill="none"/><rect x=".5" y=".9" width="2.2" height="8.1" rx="1.1" fill="#f2f2f2" stroke="#555" stroke-width=".9"/><rect x="12.3" y=".9" width="2.2" height="8.1" rx="1.1" fill="#ddd" stroke="#555" stroke-width=".9"/></svg></span><span class="n">18" HDPE LOT</span><span class="sw"><b style="background:#d00000"></b></span><span class="fc"><svg class="fu" width="13" height="12" viewBox="0 0 13 12"><path d="M.6 .5L3.7 4.5V11.3H9V4.5L12.1 .5" fill="none" stroke="#222" stroke-width="1.3"/></svg></span></div><div class="lr" style="top:177px"><span class="a">Storm</span><span class="b">Pipe</span><span class="ic"><svg class="pi" width="15" height="10" viewBox="0 0 15 10"><path d="M3 2.6h9" stroke="#555" stroke-width="1.1" fill="none"/><path d="M3 7.4h9" stroke="#777" stroke-width="1" fill="none"/><rect x=".5" y=".9" width="2.2" height="8.1" rx="1.1" fill="#f2f2f2" stroke="#555" stroke-width=".9"/><rect x="12.3" y=".9" width="2.2" height="8.1" rx="1.1" fill="#ddd" stroke="#555" stroke-width=".9"/></svg></span><span class="n">18" HDPE ROADWAY</span><span class="sw"><b style="background:#00f000"></b></span><span class="fc"><svg class="fu" width="13" height="12" viewBox="0 0 13 12"><path d="M.6 .5L3.7 4.5V11.3H9V4.5L12.1 .5" fill="none" stroke="#222" stroke-width="1.3"/></svg></span></div><div class="lr" style="top:194px"><span class="a">Storm</span><span class="b">Pipe</span><span class="ic"><svg class="pi" width="15" height="10" viewBox="0 0 15 10"><path d="M3 2.6h9" stroke="#555" stroke-width="1.1" fill="none"/><path d="M3 7.4h9" stroke="#777" stroke-width="1" fill="none"/><rect x=".5" y=".9" width="2.2" height="8.1" rx="1.1" fill="#f2f2f2" stroke="#555" stroke-width=".9"/><rect x="12.3" y=".9" width="2.2" height="8.1" rx="1.1" fill="#ddd" stroke="#555" stroke-width=".9"/></svg></span><span class="n">18" N12 LOT</span><span class="sw"><b style="background:#00f000"></b></span><span class="fc"><svg class="fu" width="13" height="12" viewBox="0 0 13 12"><path d="M.6 .5L3.7 4.5V11.3H9V4.5L12.1 .5" fill="none" stroke="#222" stroke-width="1.3"/></svg></span></div><div class="lr" style="top:211px"><span class="a">Storm</span><span class="b">Pipe</span><span class="ic"><svg class="pi" width="15" height="10" viewBox="0 0 15 10"><path d="M3 2.6h9" stroke="#555" stroke-width="1.1" fill="none"/><path d="M3 7.4h9" stroke="#777" stroke-width="1" fill="none"/><rect x=".5" y=".9" width="2.2" height="8.1" rx="1.1" fill="#f2f2f2" stroke="#555" stroke-width=".9"/><rect x="12.3" y=".9" width="2.2" height="8.1" rx="1.1" fill="#ddd" stroke="#555" stroke-width=".9"/></svg></span><span class="n">18" RCP LOT</span><span class="sw"><b style="background:#c0c0c0"></b></span><span class="fc"><svg class="fu" width="13" height="12" viewBox="0 0 13 12"><path d="M.6 .5L3.7 4.5V11.3H9V4.5L12.1 .5" fill="none" stroke="#222" stroke-width="1.3"/></svg></span></div><div class="lr" style="top:228px"><span class="sw"><b style="background:#222;height:2px"></b></span></div><div class="cv" style="left:59px"></div><div class="cv" style="left:119px"></div><div class="cv" style="left:140px"></div><div class="cv" style="left:449px"></div><div class="cv" style="left:470px"></div><div class="cv" style="left:491px"></div><div class="sbar"><u style="top:132px;height:17px"></u></div></div>
<div class="btn" style="left:538px;top:62px"><span>Add</span></div><div class="btn" style="left:537px;top:103px"><span>Clear</span></div><div class="btn" style="left:538px;top:143px"><span>Import</span></div><div class="btn" style="left:538px;top:184px"><span>Save</span></div><div class="btn ok" style="left:538px;top:224px"><span>OK</span></div><div class="btn" style="left:538px;top:265px"><span>Cancel</span></div>
<div class="list2"><div class="hd h2"><span style="left:0;width:68px">Type</span><span style="left:68px;width:21px"></span><span style="left:89px;width:194px">Material</span><span style="left:283px;width:68px">Section</span><span style="left:351px;width:85px">Multiplier</span><span style="left:436px;width:68px">Unit</span><span class="two" style="left:504px;width:72px">Ignore for<br>Surface</span></div><div class="mr" style="top:34px"><span class="t">Length</span><span class="l"><svg class="li" width="10" height="13" viewBox="0 0 10 13"><path d="M1 0v12.2h8.6" fill="none" stroke="#3c3c3c" stroke-width="1.35"/></svg></span><span class="m">Select</span><span class="s">0.0000</span><span class="x">0.03703700</span><span class="u">CY</span><span class="k"><em></em></span></div><div class="mr" style="top:51px"><span class="t">Length</span><span class="l"><svg class="li" width="10" height="13" viewBox="0 0 10 13"><path d="M1 0v12.2h8.6" fill="none" stroke="#3c3c3c" stroke-width="1.35"/></svg></span><span class="m">Cover</span><span class="s">3.7329</span><span class="x">0.03703700</span><span class="u">CY</span><span class="k"><em></em></span></div><div class="mr" style="top:68px"><span class="t">Length</span><span class="l"><svg class="li" width="10" height="13" viewBox="0 0 10 13"><path d="M1 0v12.2h8.6" fill="none" stroke="#3c3c3c" stroke-width="1.35"/></svg></span><span class="m">Displacement</span><span class="s">1.7671</span><span class="x">0.03703700</span><span class="u">CY</span><span class="k"><em></em></span></div><div class="mr" style="top:85px"><span class="t">Length</span><span class="l"><svg class="li" width="10" height="13" viewBox="0 0 10 13"><path d="M1 0v12.2h8.6" fill="none" stroke="#3c3c3c" stroke-width="1.35"/></svg></span><span class="m">Bedding</span><span class="s">2.0000</span><span class="x">0.03703700</span><span class="u">CY</span><span class="k"><em></em></span></div><div class="mr" style="top:102px"><span class="t">Length</span><span class="l"><svg class="li" width="10" height="13" viewBox="0 0 10 13"><path d="M1 0v12.2h8.6" fill="none" stroke="#3c3c3c" stroke-width="1.35"/></svg></span><span class="m">Spoil</span><span class="s">7.5000</span><span class="x">0.03703700</span><span class="u">CY</span><span class="k"><em></em></span></div><div class="mr blank" style="top:119px"><span class="t"></span><span class="l"></span><span class="m"></span><span class="s"></span><span class="x"></span><span class="u"></span><span class="k"></span></div><div class="sbar2"><u style="top:17px;height:37px"></u></div></div>
<svg class="grip" width="9" height="9" viewBox="0 0 9 9"><g fill="#bdbdbd"><rect x="6" y="0" width="2" height="2"/><rect x="3" y="3" width="2" height="2"/><rect x="6" y="3" width="2" height="2"/><rect x="0" y="6" width="2" height="2"/><rect x="3" y="6" width="2" height="2"/><rect x="6" y="6" width="2" height="2"/></g></svg>
</div>
</body></html>
